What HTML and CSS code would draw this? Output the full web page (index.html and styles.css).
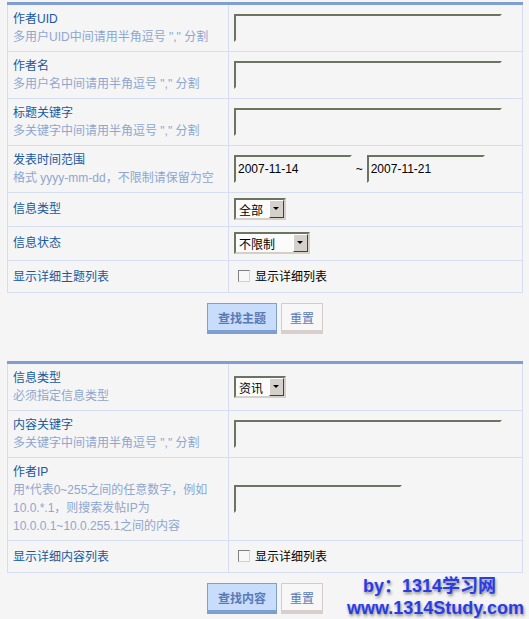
FILE: index.html
```html
<!DOCTYPE html>
<html lang="zh-CN">
<head>
  <meta charset="UTF-8">
  <title>查找主题 / 查找内容</title>
  <link rel="stylesheet" href="styles.css">
</head>
<body>
  <div class="page">

    <!-- 查找主题 -->
    <table class="search-table">
      <tr>
        <td class="label">
          <div class="title">作者UID</div>
          <div class="tip">多用户UID中间请用半角逗号 "," 分割</div>
        </td>
        <td class="field"><input type="text" class="text-input"></td>
      </tr>
      <tr>
        <td class="label">
          <div class="title">作者名</div>
          <div class="tip">多用户名中间请用半角逗号 "," 分割</div>
        </td>
        <td class="field"><input type="text" class="text-input"></td>
      </tr>
      <tr>
        <td class="label">
          <div class="title">标题关键字</div>
          <div class="tip">多关键字中间请用半角逗号 "," 分割</div>
        </td>
        <td class="field"><input type="text" class="text-input"></td>
      </tr>
      <tr>
        <td class="label">
          <div class="title">发表时间范围</div>
          <div class="tip">格式 yyyy-mm-dd，不限制请保留为空</div>
        </td>
        <td class="field">
          <input type="text" class="text-input date-input" value="2007-11-14">
          <span class="tilde">~</span>
          <input type="text" class="text-input date-input" value="2007-11-21">
        </td>
      </tr>
      <tr class="row-select">
        <td class="label"><div class="title">信息类型</div></td>
        <td class="field">
          <span class="select select-short">
            <select><option>全部</option></select>
            <span class="select-arrow"></span>
          </span>
        </td>
      </tr>
      <tr class="row-select">
        <td class="label"><div class="title">信息状态</div></td>
        <td class="field">
          <span class="select select-wide">
            <select><option>不限制</option></select>
            <span class="select-arrow"></span>
          </span>
        </td>
      </tr>
      <tr class="row-check">
        <td class="label"><div class="title">显示详细主题列表</div></td>
        <td class="field">
          <label class="check"><input type="checkbox"> 显示详细列表</label>
        </td>
      </tr>
    </table>

    <div class="buttons">
      <button class="btn btn-primary">查找主题</button>
      <button class="btn btn-reset">重置</button>
    </div>

    <!-- 查找内容 -->
    <table class="search-table">
      <tr>
        <td class="label">
          <div class="title">信息类型</div>
          <div class="tip">必须指定信息类型</div>
        </td>
        <td class="field">
          <span class="select select-short">
            <select><option>资讯</option></select>
            <span class="select-arrow"></span>
          </span>
        </td>
      </tr>
      <tr>
        <td class="label">
          <div class="title">内容关键字</div>
          <div class="tip">多关键字中间请用半角逗号 "," 分割</div>
        </td>
        <td class="field"><input type="text" class="text-input"></td>
      </tr>
      <tr>
        <td class="label">
          <div class="title">作者IP</div>
          <div class="tip">用*代表0~255之间的任意数字，例如<br>10.0.*.1，则搜索发帖IP为<br>10.0.0.1~10.0.255.1之间的内容</div>
        </td>
        <td class="field"><input type="text" class="text-input ip-input"></td>
      </tr>
      <tr class="row-check">
        <td class="label"><div class="title">显示详细内容列表</div></td>
        <td class="field">
          <label class="check"><input type="checkbox"> 显示详细列表</label>
        </td>
      </tr>
    </table>

    <div class="buttons">
      <button class="btn btn-primary">查找内容</button>
      <button class="btn btn-reset">重置</button>
    </div>

    <div class="watermark">
      <div class="wm-by">by：1314学习网</div>
      <div>www.1314Study.com</div>
    </div>
  </div>
</body>
</html>
```

FILE: styles.css
```css
html, body {
  margin: 0;
  background-color: #f5f5f5;
}

body {
  font-family: "Liberation Sans", "Noto Sans CJK SC", sans-serif;
  font-size: 12px;
  line-height: 18px;
}

.page {
  position: relative;
  padding: 2px 6px 0 7px;
  height: 617px;
}

.search-table {
  width: 516px;
  border-collapse: collapse;
  border-top: 3px solid #7f9fd0;
  border-left: 1px solid #d6def4;
  border-right: 1px solid #d6def4;
}

.search-table td {
  border: 1px solid #d6def4;
  padding: 5px 5px;
  vertical-align: middle;
}

.search-table td.label {
  width: 210px;
}

.title {
  color: #18599f;
}

.tip {
  color: #8ea6d1;
}

.text-input {
  width: 268px;
  height: 28px;
  box-sizing: border-box;
  margin: 0;
  padding: 0 2px;
  border: 2px solid;
  border-color: #6b7361 #f5f5f5 #f5f5f5 #6b7361;
  background: transparent;
  font-family: "Liberation Sans", sans-serif;
  font-size: 12px;
  color: #000;
  vertical-align: middle;
}

.date-input {
  width: 118px;
}

.ip-input {
  width: 168px;
}

.tilde {
  display: inline-block;
  width: 8px;
  text-align: center;
  vertical-align: middle;
}

.row-select td {
  padding-top: 5px;
  padding-bottom: 6px;
}

.row-check td {
  padding-top: 6px;
  padding-bottom: 5px;
}

.select {
  position: relative;
  display: inline-block;
  vertical-align: middle;
  height: 22px;
}

.select select {
  appearance: none;
  -webkit-appearance: none;
  height: 22px;
  margin: 0;
  padding: 0 0 0 3px;
  box-sizing: border-box;
  border: 2px solid;
  border-color: #6b7361 #d4d0c8 #d4d0c8 #6b7361;
  border-radius: 0;
  background: #fbfbfb;
  font-family: "Noto Sans CJK SC", sans-serif;
  font-size: 12px;
  color: #000;
  outline: none;
}

.select-short select {
  width: 52px;
}

.select-wide select {
  width: 76px;
}

.select-arrow {
  position: absolute;
  top: 2px;
  right: 2px;
  width: 15px;
  height: 18px;
  box-sizing: border-box;
  background: #d6d0cc;
  border: 1px solid;
  border-color: #ffffff #404040 #404040 #ffffff;
}

.select-arrow::after {
  content: "";
  position: absolute;
  left: 3px;
  top: 6px;
  border-left: 3px solid transparent;
  border-right: 3px solid transparent;
  border-top: 3px solid #000;
}

.check {
  display: inline-flex;
  align-items: center;
  margin-left: 4px;
  color: #000;
  font-family: "Noto Sans CJK SC", sans-serif;
}

.check input {
  appearance: none;
  -webkit-appearance: none;
  width: 12px;
  height: 12px;
  margin: 0 5px 0 0;
  box-sizing: border-box;
  border: 1px solid;
  border-color: #808080 #d4d0c8 #d4d0c8 #808080;
  background: #f8f8f8;
}

.buttons {
  display: flex;
  justify-content: center;
  gap: 4px;
  width: 516px;
  margin: 10px 0 27px;
}

.btn {
  height: 31px;
  box-sizing: border-box;
  padding: 0;
  font-family: "Noto Sans CJK SC", sans-serif;
  font-size: 12px;
  color: #5a79b6;
  cursor: pointer;
}

.btn-primary {
  width: 70px;
  background: #c7ddfb;
  border: 1px solid #7f9fd0;
  border-bottom: 4px solid #7f9fd0;
  font-weight: bold;
}

.btn-reset {
  width: 42px;
  background: #f7f7f7;
  border: 1px solid #d4cccc;
  border-bottom: 4px solid #d8cece;
}

.watermark {
  position: absolute;
  right: 5px;
  bottom: 0;
  text-align: right;
  font-family: "Liberation Sans", "Noto Sans CJK SC", sans-serif;
  font-size: 18px;
  font-weight: bold;
  line-height: 22px;
  color: #2a3ce6;
  text-shadow: 1px 2px 3px #8a8a8a;
}

.wm-by {
  margin-right: 28px;
}
```
